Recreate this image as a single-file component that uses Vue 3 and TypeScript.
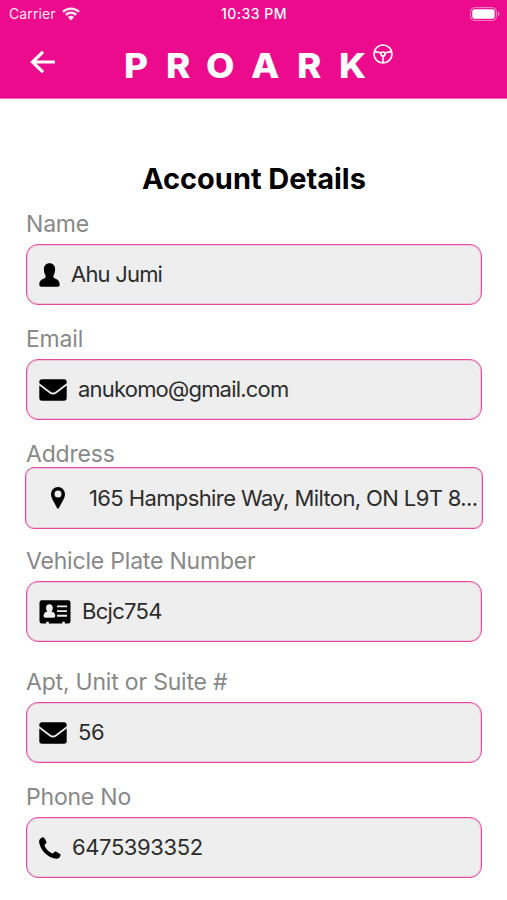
<script setup lang="ts">
interface Field {
  key: string
  label: string
  value: string
  icon: 'user' | 'mail' | 'pin' | 'card' | 'phone'
}

const logo: string[] = ['P', 'R', 'O', 'A', 'R', 'K']

const fields: Field[] = [
  { key: 'name', label: 'Name', value: 'Ahu Jumi', icon: 'user' },
  { key: 'email', label: 'Email', value: 'anukomo@gmail.com', icon: 'mail' },
  { key: 'address', label: 'Address', value: '165 Hampshire Way, Milton, ON L9T 8...', icon: 'pin' },
  { key: 'plate', label: 'Vehicle Plate Number', value: 'Bcjc754', icon: 'card' },
  { key: 'unit', label: 'Apt, Unit or Suite #', value: '56', icon: 'mail' },
  { key: 'phone', label: 'Phone No', value: '6475393352', icon: 'phone' },
]
</script>

<template>
  <div class="screen">
    <header class="header">
      <div class="status">
        <div class="carrier">
          <span>Carrier</span>
          <svg class="wifi" viewBox="0 0 18 14" width="18" height="14">
            <path d="M1 4.9a11.6 11.6 0 0 1 16 0M3.8 7.8a7.6 7.6 0 0 1 10.4 0" fill="none" stroke="#fff" stroke-width="2.3" />
            <path d="M5.8 10.3a4.7 4.7 0 0 1 6.4 0L9 13.6z" fill="#fff" />
          </svg>
        </div>
        <span class="time">10:33 PM</span>
        <svg class="battery" viewBox="0 0 30 14" width="30" height="14">
          <rect x=".6" y=".6" width="25.8" height="12.8" rx="3.8" fill="none" stroke="#fff" stroke-opacity=".5" />
          <rect x="2.3" y="2.3" width="22.4" height="9.4" rx="2.2" fill="#fff" />
          <path d="M27.8 4.8c2.2.7 2.2 3.7 0 4.4z" fill="#fff" fill-opacity=".55" />
        </svg>
      </div>
      <div class="nav">
        <svg class="back" viewBox="0 0 26 24" width="26" height="24">
          <path d="M25 12H2.5M13 1.8L2.5 12 13 22.2" fill="none" stroke="#fff" stroke-width="3.2" />
        </svg>
        <div class="logo">
          <span v-for="(letter, i) in logo" :key="i" class="letter">{{ letter }}</span>
        </div>
        <svg class="wheel" viewBox="0 0 20 20" width="20" height="20">
          <g fill="none" stroke="#fff" stroke-width="1.7">
            <circle cx="10" cy="10" r="9" />
            <circle cx="10" cy="10" r="2" />
            <path d="M1.2 8C4 7.400 6 7.900 8.100 9.200M18.800 8c-2.800-.6-4.800-.1-6.900 1.200M10 12v7" />
          </g>
        </svg>
      </div>
    </header>

    <main class="content">
      <h1 class="title">Account Details</h1>
      <div v-for="field in fields" :key="field.key" class="field" :class="field.key">
        <div class="label">{{ field.label }}</div>
        <div class="box">
          <svg v-if="field.icon === 'user'" class="icon" viewBox="0 0 21 24" width="21" height="24">
            <path d="M10.5.2c3.600 0 5.600 2.400 5.600 5.900 0 3.300-.8 5.100-1.600 6.500-.4 1.400 0 2.200 1 2.600 3 1.200 5.200 2.800 5.200 6.400 0 1.500-.8 2.200-2.100 2.200H2.400C1.100 23.800.3 23.100.3 21.600c0-3.600 2.200-5.200 5.200-6.400 1-.4 1.400-1.200 1-2.600-.8-1.400-1.600-3.200-1.600-6.500C4.900 2.600 6.900.2 10.500.2z" />
          </svg>
          <svg v-else-if="field.icon === 'mail'" class="icon" viewBox="0 0 28 22" width="28" height="22">
            <path d="M.3 4.200V3A2.700 2.700 0 0 1 3 .3h22A2.700 2.700 0 0 1 27.700 3v1.200L16.500 12.700c-1.700 1.200-3.300 1.200-5 0z" />
            <path d="M.3 6.400l10.200 7.800c2.400 1.700 4.600 1.700 7 0L27.700 6.400v12.600a2.700 2.700 0 0 1-2.700 2.700H3A2.700 2.700 0 0 1 .3 19z" />
          </svg>
          <svg v-else-if="field.icon === 'pin'" class="icon" viewBox="0 0 14 22" width="14" height="22">
            <path fill-rule="evenodd" d="M7 0a7 7 0 0 1 7 7c0 4.200-3.500 8.500-5.600 13.300L7 22l-1.400-1.700C3.500 15.500 0 11.200 0 7a7 7 0 0 1 7-7zm0 3.600a3.500 3.500 0 1 0 0 7 3.500 3.500 0 0 0 0-7z" />
          </svg>
          <svg v-else-if="field.icon === 'card'" class="icon" viewBox="0 0 32 24" width="32" height="24">
            <path d="M2.800.3h26.400a2.300 2.300 0 0 1 2.300 2.300v18.600a2.300 2.300 0 0 1-2.300 2.300h-3.400v-1.700h-2.600v1.700H9.800v-1.700H7.200v1.700H2.800A2.300 2.300 0 0 1 .5 21.200V2.600A2.300 2.300 0 0 1 2.800.3z" />
            <path fill="#eee" d="M10.400 4.300c2.200 0 3.400 1.700 3.400 3.800 0 1.500-.6 2.600-1.400 3.400 2.400.5 3.900 1.800 3.900 4.300 0 1.300-.7 1.900-1.900 1.900h-8c-1.200 0-1.900-.6-1.900-1.900 0-2.500 1.500-3.800 3.900-4.300C7.600 10.700 7 9.600 7 8.100c0-2.100 1.200-3.800 3.400-3.800z" />
            <path d="M18 6.400h10M18 11.100h10M18 15.800h10" stroke="#eee" stroke-width="1.900" />
          </svg>
          <svg v-else class="icon" viewBox="0 0 22 22" width="22" height="22">
            <path d="M1.800 1.200C3 .2 4.500-.1 5.300 1l2 3.600c.4.9 0 1.800-.8 2.400-.8.600-1.200 1-.8 1.900 1.300 3 4 5.900 7.200 7.400.9.400 1.400 0 2-.8.700-.9 1.500-1.300 2.400-.8l3.700 2.200c1.100.8.600 2.300-.4 3.400-1.200 1.400-2.900 1.700-4.800 1.300C8.200 20 1.300 12.800.2 5.800-.1 4 .4 2.300 1.800 1.200z" />
          </svg>
          <span class="value">{{ field.value }}</span>
        </div>
      </div>
    </main>
  </div>
</template>

<style>
body {
  margin: 0;
  background: #fff;
}
</style>

<style scoped>
.screen {
  width: 507px;
  height: 900px;
  overflow: hidden;
  background: #fff;
  font-family: Inter, "Liberation Sans", sans-serif;
}
.header {
  box-sizing: border-box;
  height: 99px;
  border-bottom: 1px solid #f365b5;
  background: #ec0b8c;
  background-clip: padding-box;
  color: #fff;
}
.status {
  display: grid;
  grid-template-columns: 1fr auto 1fr;
  align-items: center;
  height: 27px;
  padding: 0 7px 0 9px;
  font-size: 14px;
  line-height: 27px;
}
.carrier {
  display: flex;
  align-items: center;
  gap: 6px;
  opacity: .9;
}
.carrier span {
  letter-spacing: .1px;
}
.time {
  margin-right: 1px;
  font-weight: 500;
  font-size: 14px;
  letter-spacing: .5px;
}
.battery {
  justify-self: end;
}
.nav {
  display: flex;
  height: 71px;
}
.back {
  margin: 23px 0 0 30px;
}
.logo {
  display: grid;
  grid-template-columns: 42px 40px 45px 46px 42px 26px;
  margin: 19px 0 0 68px;
  font-size: 33.500px;
  font-weight: 800;
  line-height: 40px;
}
.letter {
  justify-self: start;
  transform: scaleX(1.1);
  transform-origin: left;
}
.wheel {
  margin: 17px 0 0 8px;
}
.content {
  padding: 60px 25px 0 26px;
}
.title {
  margin: 0 0 11px;
  font-size: 29px;
  font-weight: 700;
  line-height: 40px;
  text-align: center;
  letter-spacing: -.03px;
}
.field {
  margin-bottom: 20px;
}
.label {
  height: 34px;
  line-height: 28px;
  font-size: 23px;
  color: #888;
  letter-spacing: -.2px;
}
.box {
  display: flex;
  align-items: center;
  box-sizing: border-box;
  height: 61px;
  padding-left: 12px;
  border: 1px solid #e549a5;
  border-radius: 12px;
  background: #eee;
  box-shadow: inset 0 0 0 1px rgba(229, 73, 165, .22);
}
.icon {
  flex: none;
}
.value {
  margin-left: 11px;
  padding-bottom: 1px;
  font-size: 22px;
  line-height: 30px;
  color: #2c2c2c;
  white-space: nowrap;
  letter-spacing: -.8px;
}
.address {
  margin-bottom: 18px;
}
.address .label {
  height: 27px;
}
.address .box {
  height: 62px;
  margin: 0 -1px;
  padding-left: 25px;
  border-radius: 9px;
}
.address .value {
  margin-left: 24px;
  padding-bottom: 0;
  letter-spacing: -.61px;
}
.plate {
  margin-bottom: 26px;
}
.plate .value {
  letter-spacing: -.7px;
}
.unit .value {
  letter-spacing: -.3px;
}
.phone .value {
  letter-spacing: -.4px;
}
</style>
